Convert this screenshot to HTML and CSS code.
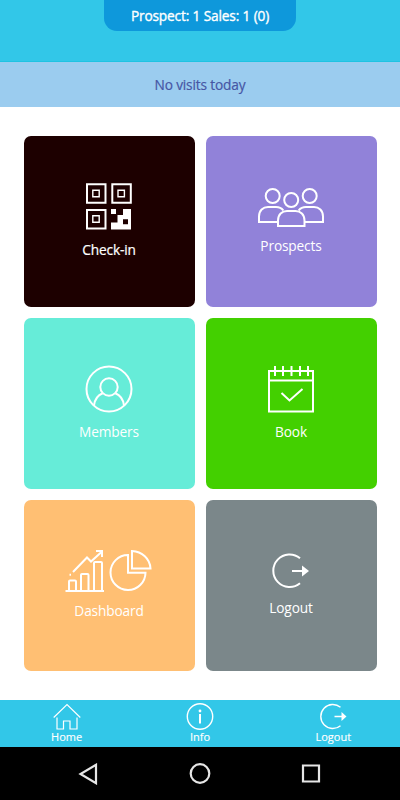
FILE: index.html
```html
<!DOCTYPE html>
<html lang="en">
<head>
<meta charset="utf-8">
<title>Dashboard</title>
<link rel="stylesheet" href="styles.css">
</head>
<body>
<header class="header"><div class="summary">Prospect: 1 Sales: 1 (0)</div></header>
<div class="notice">No visits today</div>
<main class="tiles">
  <a class="tile checkin">
    <svg width="46" height="47" viewBox="0 0 46 47"><g fill="none" stroke="#fff" stroke-width="2"><path d="M1 1.2h18.5v18.5H1zM26.3 1.2h18.5v18.5H26.3zM1 27h18.5v18.5H1z"/><path stroke-width="1.400" d="M6.800 7.300h6.400v6.400H6.800zM32 7.300h6.400v6.400H32zM6.800 32.800h6.400v6.400H6.800z"/></g><path fill="#fff" fill-rule="evenodd" d="M25 26h5v5h-5zM37 26h8v20.500H25V39.500h6.500V32H37zM37 36.300v5h5v-5z"/></svg>
    <span>Check-in</span>
  </a>
  <a class="tile prospects">
    <svg width="66" height="39" viewBox="0 0 66 39" fill="none" stroke="#fff" stroke-width="2"><circle cx="14.700" cy="8" r="7"/><circle cx="51.700" cy="8" r="7"/><circle cx="33.200" cy="12" r="7"/><path d="M19 34H1v-5.500c0-6 4-9.500 9-9.500h8c3 0 5.500 1 7.300 3.300M47 34h18v-5.500c0-6-4-9.500-9-9.500h-8c-3 0-5.500 1-7.300 3.300M20 38v-5.500c0-6 4-9.500 9-9.500h8.500c5 0 9 3.500 9 9.500V38z"/></svg>
    <span>Prospects</span>
  </a>
  <a class="tile members">
    <svg width="48" height="48" viewBox="0 0 48 48" fill="none" stroke="#fff" stroke-width="2"><circle cx="24" cy="24" r="22.500"/><circle cx="24" cy="22" r="8.700"/><path d="M9 40.500c.8-6.500 4-10.500 8.700-12.300M39 40.500c-.8-6.500-4-10.500-8.700-12.300"/></svg>
    <span>Members</span>
  </a>
  <a class="tile book">
    <svg width="46" height="47" viewBox="0 0 46 47" fill="none" stroke="#fff" stroke-width="2"><path d="M1 5h44v40.500H1zM1 14.500h44M13.500 27l8 7.500L34.500 23"/><path d="M7 0v10M15 0v10M23.500 0v10M32 0v10M40 0v10"/></svg>
    <span>Book</span>
  </a>
  <a class="tile dashboard">
    <svg width="88" height="42" viewBox="0 0 88 42" fill="none" stroke="#fff" stroke-width="2"><path d="M.5 41H39M4 40V31.500q0-1 1-1h5q1 0 1 1V40M16 40V25q0-1 1-1h5.500q1 0 1 1v15M29 40V13q0-1 1-1h6q1 0 1 1v27M8 22L22 7.500l4 4L36.500 2M31 1h6v6M4.500 24.800h1.500M63 5A17.500 17.500 0 1 0 80.500 22.700H63zM67 1v17.500h18.500C85 8.500 77 1.500 67 1z"/></svg>
    <span>Dashboard</span>
  </a>
  <a class="tile logout">
    <svg width="38" height="36" viewBox="0 0 38 36" fill="none" stroke="#fff" stroke-width="2"><path d="M28 5.200A16.300 16.300 0 1 0 28 30.300M20 18h12"/><path fill="#fff" stroke="none" d="M30 12.500l7 5.500-7 5.500z"/></svg>
    <span>Logout</span>
  </a>
</main>
<nav class="tabs">
  <a class="tab"><svg width="28" height="28" viewBox="0 0 28 28" fill="none" stroke="#fff" stroke-width="1.200"><path d="M.7 14.500L14 1.500l13.300 13M4 14.500V26h6.500v-8h6.500v8h7V14.500"/></svg><span>Home</span></a>
  <a class="tab"><svg width="28" height="28" viewBox="0 0 28 28" fill="none" stroke="#fff" stroke-width="1.400"><circle cx="14" cy="13.500" r="12.700"/><circle cx="14" cy="8" r="1.400" fill="#fff" stroke="none"/><path stroke-width="2" d="M14 11v9.500"/></svg><span>Info</span></a>
  <a class="tab"><svg width="28" height="28" viewBox="0 0 28 28" fill="none" stroke="#fff" stroke-width="1.400"><path d="M21.500 4.300A12 12 0 1 0 21.500 22.700M15.500 13.500h9"/><path fill="#fff" stroke="none" d="M22.500 9l5 4.500-5 4.500z"/></svg><span>Logout</span></a>
</nav>
<footer class="system">
  <svg width="22" height="22" viewBox="0 0 22 22"><path d="M18 1.800v18.400L2.500 11z"/></svg>
  <svg width="22" height="22" viewBox="0 0 22 22"><circle cx="11" cy="10.500" r="9.300"/></svg>
  <svg width="22" height="22" viewBox="0 0 22 22"><path d="M3 2.500h16v16H3z"/></svg>
</footer>
</body>
</html>
```
FILE: styles.css
```css
* { box-sizing: border-box; }
body {
  margin: 0;
  height: 800px;
  display: flex;
  flex-direction: column;
  background: #fff;
  color: #fff;
  font: 13.7px/20px "Open Sans", sans-serif;
  letter-spacing: -0.15px;
  overflow: hidden;
}
svg { display: block; flex: none; }
.header {
  height: 62px;
  background: #32c7e8;
  border-bottom: 1px solid #1fc3e2;
}
.summary {
  width: 192px;
  height: 31px;
  margin: 0 auto;
  padding-top: 6px;
  border-radius: 0 0 13px 13px;
  background: #0e98db;
  text-align: center;
  -webkit-text-stroke: 0.35px #fff;
  white-space: nowrap;
}
.notice {
  height: 44.5px;
  padding-top: 13px;
  background: #9bccef;
  color: #4656a5;
  text-align: center;
  -webkit-text-stroke: 0.2px #4656a5;
}
.tiles {
  flex: 1;
  display: grid;
  grid-template-columns: 171px 171px;
  grid-auto-rows: 171px;
  gap: 11px;
  padding: 29px 23.5px 0;
}
.tile {
  display: flex;
  flex-direction: column;
  align-items: center;
  justify-content: center;
  gap: 9px;
  padding-top: 1.5px;
  border-radius: 7px;
}
.checkin {
  background: #1d0000;
  padding-top: 0.5px;
  gap: 9.5px;
  -webkit-text-stroke: 0.2px #fff;
}
.prospects { background: #9182d9; }
.members { background: #66ecd8; }
.book { background: #43d000; }
.dashboard { background: #ffbf73; }
.logout { background: #7b878a; }
.tabs {
  height: 47px;
  display: flex;
  background: #32c7e8;
}
.tab {
  flex: 1;
  display: flex;
  flex-direction: column;
  align-items: center;
  padding-top: 3px;
  font-size: 11px;
  line-height: 12px;
  letter-spacing: 0;
  -webkit-text-stroke: 0.15px #fff;
}
.system {
  height: 53px;
  display: flex;
  align-items: center;
  justify-content: center;
  gap: 89px;
  background: #000;
}
.system svg {
  fill: none;
  stroke: #e6e6e6;
  stroke-width: 2.2;
}
```
